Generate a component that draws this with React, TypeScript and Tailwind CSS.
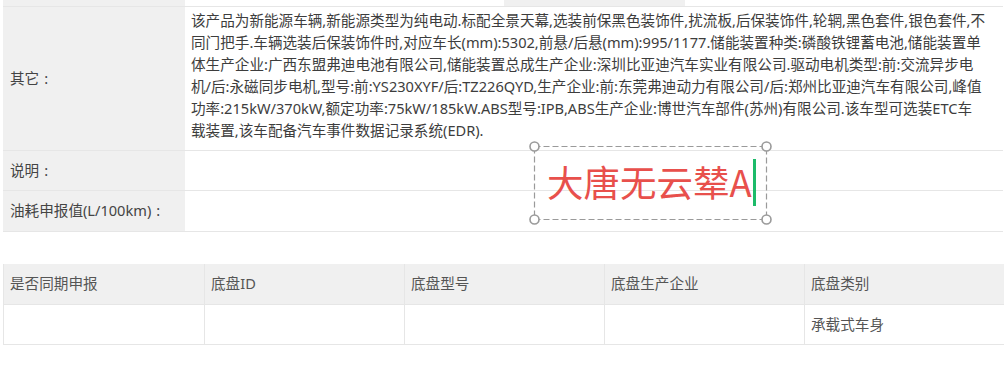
import React from "react";

const font = "font-['Noto_Sans','Noto_Sans_CJK_SC',sans-serif]";

const otherLines = [
  "该产品为新能源车辆,新能源类型为纯电动.标配全景天幕,选装前保黑色装饰件,扰流板,后保装饰件,轮辋,黑色套件,银色套件,不",
  "同门把手.车辆选装后保装饰件时,对应车长(mm):5302,前悬/后悬(mm):995/1177.储能装置种类:磷酸铁锂蓄电池,储能装置单",
  "体生产企业:广西东盟弗迪电池有限公司,储能装置总成生产企业:深圳比亚迪汽车实业有限公司.驱动电机类型:前:交流异步电",
  "机/后:永磁同步电机,型号:前:YS230XYF/后:TZ226QYD,生产企业:前:东莞弗迪动力有限公司/后:郑州比亚迪汽车有限公司,峰值",
  "功率:215kW/370kW,额定功率:75kW/185kW.ABS型号:IPB,ABS生产企业:博世汽车部件(苏州)有限公司.该车型可选装ETC车",
  "载装置,该车配备汽车事件数据记录系统(EDR).",
];

const chassisCols = [
  { head: "是否同期申报", value: "" },
  { head: "底盘ID", value: "" },
  { head: "底盘型号", value: "" },
  { head: "底盘生产企业", value: "" },
  { head: "底盘类别", value: "承载式车身" },
];

function Label({ text }: { text: string }) {
  return (
    <div className="bg-[#f0f0f0] flex items-center pl-[7px] text-[#444]">
      {text}
      <span className="ml-[5px]">:</span>
    </div>
  );
}

export default function App() {
  return (
    <div className={`relative w-[1005px] h-[375px] bg-white overflow-hidden text-[14.6px] ${font}`}>
      {/* Vehicle params table (tail) */}
      <div className="ml-[3px] w-[1000px]">
        <div className="grid grid-cols-[182px_319px_181px_1fr] h-[7px] border-b border-[#e6e6e6]">
          <div className="bg-[#f0f0f0]" />
          <div />
          <div className="bg-[#f0f0f0]" />
          <div />
        </div>

        <div className="grid grid-cols-[182px_1fr] border-b border-[#e6e6e6]">
          <Label text="其它" />
          <div className="pl-[6px] pt-[2px] pb-[9px] leading-[22px] text-[#3d3d3d] whitespace-nowrap">
            {otherLines.map((line, i) => (
              <div key={i}>{line}</div>
            ))}
          </div>
        </div>

        <div className="grid grid-cols-[182px_1fr] h-[40px] border-b border-[#e6e6e6]">
          <Label text="说明" />
          <div />
        </div>

        <div className="grid grid-cols-[182px_1fr] h-[41px] border-b border-[#e6e6e6]">
          <Label text="油耗申报值(L/100km)" />
          <div />
        </div>
      </div>

      {/* Chassis table */}
      <div className="ml-[3px] mt-[32px] w-[1001px] border-l border-b border-[#e6e6e6]">
        <div className="grid grid-cols-5 h-[41px] bg-[#f0f0f0] border-b border-[#e6e6e6]">
          {chassisCols.map((c, i) => (
            <div
              key={i}
              className={`flex items-center pl-[6px] text-[#555] ${i > 0 ? "border-l border-[#e6e6e6]" : ""}`}
            >
              {c.head}
            </div>
          ))}
        </div>
        <div className="grid grid-cols-5 h-[39px]">
          {chassisCols.map((c, i) => (
            <div
              key={i}
              className={`flex items-center pl-[6px] text-[#555] ${i > 0 ? "border-l border-[#e6e6e6]" : ""}`}
            >
              {c.value}
            </div>
          ))}
        </div>
      </div>

      {/* Text annotation overlay */}
      <div className="absolute left-[534px] top-[146px] w-[233px] h-[74px]">
        <svg className="absolute inset-0 overflow-visible" width="233" height="74">
          <rect x="0.5" y="0.5" width="232" height="73" fill="none" stroke="#9a9a9a" strokeWidth="1.2" strokeDasharray="6 3" />
          {[
            [0.5, 0.5],
            [232.5, 0.5],
            [0.5, 73.5],
            [232.5, 73.5],
          ].map(([cx, cy], i) => (
            <circle key={i} cx={cx} cy={cy} r="4.5" fill="white" stroke="#9a9a9a" strokeWidth="1.6" />
          ))}
        </svg>
        <div className="absolute left-[13px] top-[12px] flex items-center h-[48px]">
          <span className="text-[36.5px] leading-none text-[#e8504c] font-['Noto_Sans_CJK_SC','Noto_Sans',sans-serif]">
            大唐无云辇A
          </span>
          <span className="ml-[1px] w-[3px] h-[47px] bg-[#1dbb6a]" />
        </div>
      </div>
    </div>
  );
}
